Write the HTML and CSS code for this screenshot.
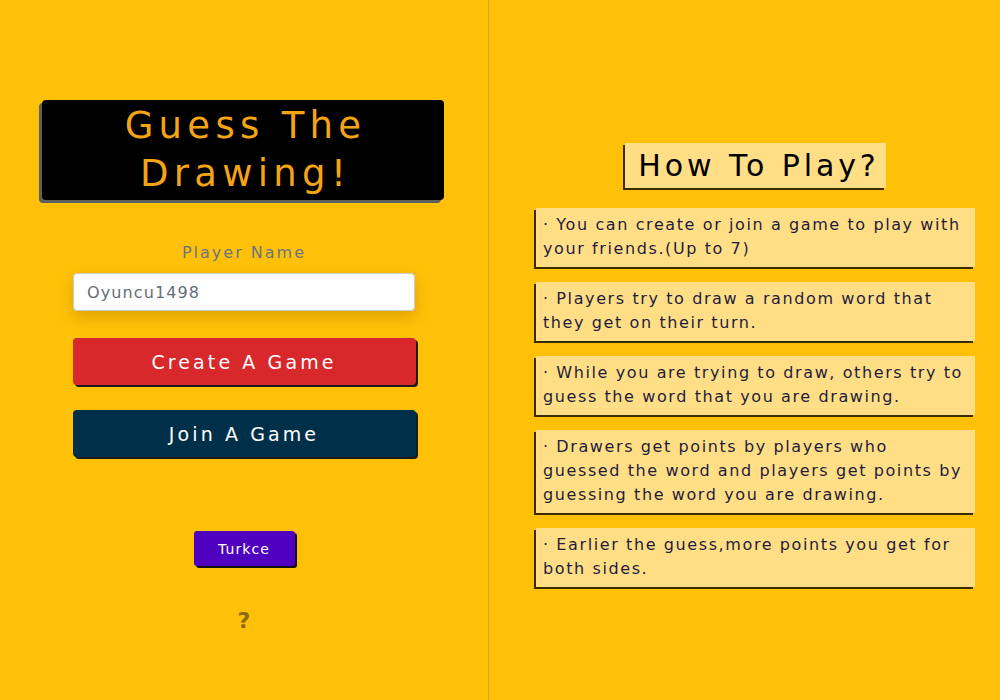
FILE: index.html
```html
<!DOCTYPE html>
<html>
<head>
<meta charset="utf-8">
<link rel="stylesheet" href="styles.css">
</head>
<body>
<div class="page">
  <section class="left">
    <div class="title-box"><h1 class="title"><span class="line">Guess The</span><span class="line">Drawing!</span></h1></div>
    <label class="label">Player Name</label>
    <div class="input">Oyuncu1498</div>
    <button class="btn btn-create">Create A Game</button>
    <button class="btn btn-join">Join A Game</button>
    <button class="btn-lang">Turkce</button>
    <div class="help">?</div>
  </section>
  <section class="right">
    <h2 class="how">How To Play?</h2>
    <div class="cards">
      <p class="card">· You can create or join a game to play with your friends.(Up to 7)</p>
      <p class="card">· Players try to draw a random word that they get on their turn.</p>
      <p class="card">· While you are trying to draw, others try to guess the word that you are drawing.</p>
      <p class="card">· Drawers get points by players who guessed the word and players get points by guessing the word you are drawing.</p>
      <p class="card">· Earlier the guess,more points you get for both sides.</p>
    </div>
  </section>
</div>
</body>
</html>
```
FILE: styles.css
```css
* { box-sizing: border-box; }
html, body { margin: 0; padding: 0; }
body {
  background: #ffc107;
  font-family: "DejaVu Sans", "Open Sans", sans-serif;
  width: 1000px;
  height: 700px;
  overflow: hidden;
}
.page { display: flex; height: 700px; }
.left {
  width: 489px;
  border-right: 1px solid #d2a833;
  display: flex;
  flex-direction: column;
  align-items: center;
  padding-top: 100px;
}
.title-box {
  width: 402px;
  height: 100px;
  margin-left: -2px;
  background: #000;
  border-radius: 4px;
  box-shadow: -3px 3px 0 #5f5f5f;
  display: flex;
  align-items: center;
  justify-content: center;
}
.title {
  margin: 0;
  color: #f4a414;
  font-weight: 400;
  font-size: 37px;
  text-align: center;
  display: flex;
  flex-direction: column;
  align-items: center;
}
.line {
  display: block;
  height: 48px;
  line-height: 48px;
  letter-spacing: 5.3px;
  margin-right: -5px;
}
.label {
  margin-top: 43px;
  color: #6c7580;
  font-size: 16px;
  letter-spacing: 2px;
  line-height: 20px;
}
.input {
  margin-top: 10px;
  width: 342px;
  height: 38px;
  background: #fff;
  border: 1px solid #ccc;
  border-radius: 4px;
  box-shadow: 0 6px 14px rgba(160, 110, 0, 0.35);
  color: #666d75;
  font-size: 16px;
  letter-spacing: 1.1px;
  padding: 0 13px;
  display: flex;
  align-items: center;
}
.btn {
  width: 343px;
  height: 47px;
  border: none;
  border-radius: 4px;
  color: #fff;
  font-family: inherit;
  font-size: 19px;
  letter-spacing: 3.1px;
  box-shadow: 2px 2px 0 #1a1a1a;
  padding: 0;
}
.btn-create { margin-top: 27px; background: #d9282b; }
.btn-join { margin-top: 25px; background: #003049; }
.btn-lang {
  margin-top: 74px;
  width: 101px;
  height: 35px;
  background: #5000bf;
  color: #fff;
  border: none;
  border-radius: 3px;
  box-shadow: 2px 2px 0 #111;
  font-family: inherit;
  font-size: 14px;
  letter-spacing: 1.1px;
  padding: 0;
}
.help {
  margin-top: 42px;
  color: #8a6a13;
  font-size: 22px;
  font-weight: 600;
}
.right {
  flex: 1;
  display: flex;
  flex-direction: column;
  align-items: center;
  padding-top: 143px;
  padding-left: 22px;
}
.how {
  margin: 0;
  background: #ffde85;
  box-shadow: -2px 2px 0 #3b2b00;
  font-weight: 400;
  font-size: 30px;
  line-height: 45px;
  letter-spacing: 3.9px;
  padding: 0 6px 0 13px;
  color: #000;
}
.cards {
  margin-top: 20px;
  width: 439px;
  display: flex;
  flex-direction: column;
  gap: 15px;
}
.card {
  margin: 0;
  background: #ffde85;
  box-shadow: -2px 2px 0 #3b2b00;
  color: #1f1d3d;
  font-size: 16px;
  line-height: 24px;
  letter-spacing: 1.6px;
  padding: 5px 3px 6px 7px;
}
```
